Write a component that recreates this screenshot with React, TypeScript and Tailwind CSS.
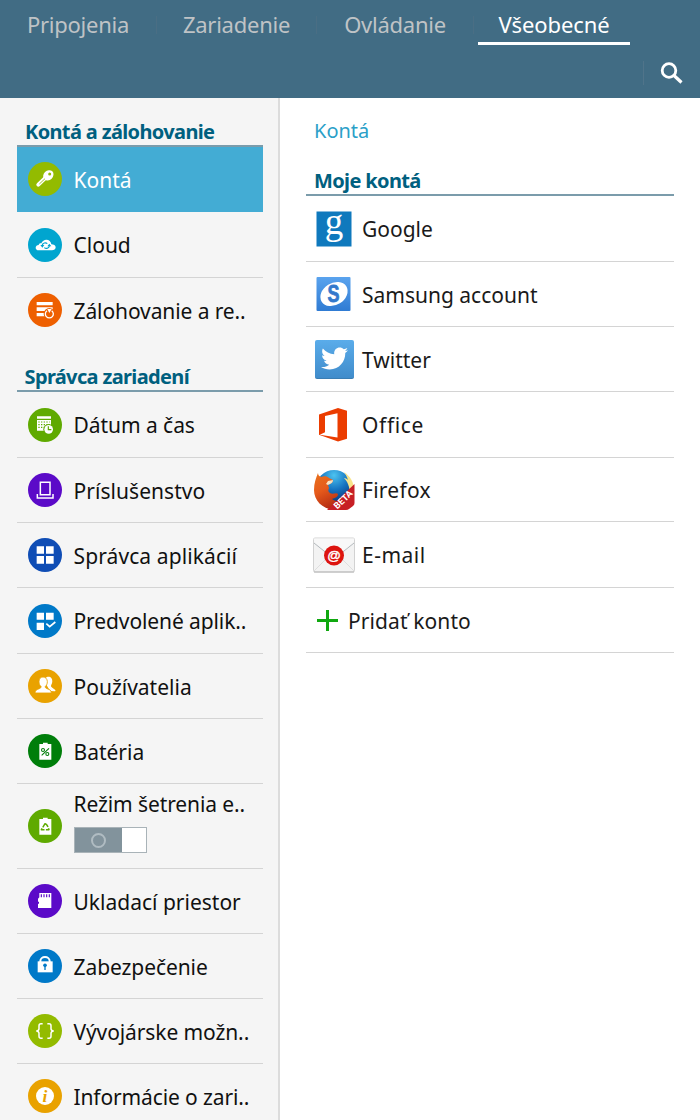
import type { ReactNode } from 'react'
import { FaTwitter } from 'react-icons/fa'

interface MenuItem {
  label: string
  icon: ReactNode
  bg: string
  height: string
  tracking?: string
  selected?: boolean
  toggle?: boolean
  last?: boolean
}

interface Account {
  label: string
  icon: ReactNode
  height: string
  tracking?: string
}

const tabs = [
  { label: 'Pripojenia', box: 'w-[157px]' },
  { label: 'Zariadenie', box: 'w-[160px]' },
  { label: 'Ovládanie', box: 'w-[157px]' },
]

/* Glyphs share the 102 unit canvas of the round badge */

const KeyGlyph = () => (
  <g>
    <path d="M53 47 31 68" stroke="#fff" strokeWidth="12" strokeLinecap="round" />
    <ellipse cx="61" cy="40" rx="17" ry="14" transform="rotate(-45 61 40)" fill="#fff" />
    <circle cx="65" cy="36" r="4.5" fill="#93bb00" />
    <path d="M51 50 34 66" stroke="#93bb00" strokeWidth="2.5" />
  </g>
)

const CloudGlyph = () => (
  <g>
    <path d="M32 67c-6 0-9-4-9-8s4-8 9-8c1-4 4-6 8-5 3-7 9-11 15-11 8 0 14 6 15 14 7 0 13 4 13 9s-5 9-11 9z" fill="#fff" />
    <g fill="none" stroke="#00a5cf" strokeWidth="3.5">
      <path d="M43 54v-3a9 8 0 0 1 15-4" />
      <path d="M64 51v3a9 8 0 0 1-15 5" />
    </g>
    <path d="M37 51h12l-6 8zM58 55h12l-6-8z" fill="#00a5cf" />
  </g>
)

const BackupGlyph = () => (
  <g>
    <path d="M26 27h48v10H26zM26 43h48v11H26zM26 60h30v10H26z" fill="#fff" />
    <circle cx="64" cy="62" r="17" fill="#ee5f00" />
    <path d="M57 53a12 12 0 1 0 14 0" fill="none" stroke="#fff" strokeWidth="4" />
    <path d="M58 48h13l-7 12z" fill="#fff" />
  </g>
)

const CalendarGlyph = () => (
  <g>
    <path d="M27 25h42v7H27zM27 36h42v32H27z" fill="#fff" />
    <path d="M31 42h34M31 50h34M31 58h34" stroke="#5faa00" strokeWidth="3.5" strokeDasharray="4 4" />
    <circle cx="62" cy="64" r="16" fill="#5faa00" />
    <circle cx="62" cy="64" r="13" fill="#fff" />
    <path d="M61 55v10h9" fill="none" stroke="#5faa00" strokeWidth="3.5" />
  </g>
)

const DockGlyph = () => (
  <g fill="none" stroke="#fff" strokeWidth="4.5">
    <path d="M37 65V28h29v37z" />
    <path d="M28 63v12h47V63" />
  </g>
)

const AppsGlyph = () => (
  <path d="M26 25h22v22H26zM54 25h23v22H54zM26 54h22v23H26zM54 54h23v23H54z" fill="#fff" />
)

const DefaultAppsGlyph = () => (
  <g>
    <path d="M26 26h22v21H26zM54 26h23v21H54zM26 56h22v22H26z" fill="#fff" />
    <path d="m55 59 10 9 17-14" fill="none" stroke="#fff" strokeWidth="5" />
  </g>
)

const UsersGlyph = () => (
  <g>
    <path d="M53 27c4-5 13-5 17 0 4 6 4 13 0 20-2 4-1 6 3 9l8 6c3 3 1 5-2 5l-13-1L57 50z" fill="#fff" />
    <path
      d="M45 24c8 0 13 6 13 14 0 6-2 11-6 14-1 4 1 5 5 7 9 3 12 4 13 13H21c1-9 5-10 13-13 4-2 6-3 5-7-4-3-6-8-6-14 0-8 4-14 12-14z"
      fill="#fff"
      stroke="#e9a200"
      strokeWidth="2.5"
    />
  </g>
)

const BatteryGlyph = () => (
  <g>
    <path d="M34 30h11v-4h14v4h11v47H34z" fill="#fff" />
    <g stroke="#007e0a" strokeWidth="3.2" fill="none">
      <path d="m41 64 22-21" />
      <circle cx="45" cy="48" r="4.5" />
      <circle cx="58" cy="60" r="4.5" />
    </g>
  </g>
)

const SaverGlyph = () => (
  <g>
    <path d="M34 30h11v-4h14v4h11v47H34z" fill="#fff" />
    <path
      d="M51 44c6 0 9 10 12 18H40z"
      fill="none"
      stroke="#5faa00"
      strokeWidth="4.5"
      strokeLinejoin="round"
      strokeDasharray="14 4"
    />
  </g>
)

const CardGlyph = () => (
  <g>
    <path d="M34 27h36v45H30V59h3v-6h-3v-9l4-4z" fill="#fff" />
    <path d="M40 31v9M48 31v9M56 31v9M64 31v9" stroke="#5b0ac8" strokeWidth="3.5" />
  </g>
)

const LockGlyph = () => (
  <g>
    <path d="M29 37h45v33H29z" fill="#fff" />
    <path d="M37 39v-3a14 12 0 0 1 28 0v3" fill="none" stroke="#fff" strokeWidth="6" />
    <circle cx="51" cy="49" r="5.5" fill="#0079c8" />
    <path d="M51 50v13" stroke="#0079c8" strokeWidth="4" />
  </g>
)

const BracesGlyph = () => (
  <g fill="none" stroke="#fff" strokeWidth="4.5">
    <path d="M44 29h-5q-6 0-6 6v9q0 6-8 7 8 1 8 7v9q0 6 6 6h5" />
    <path d="M58 29h5q6 0 6 6v9q0 6 8 7-8 1-8 7v9q0 6-6 6h-5" />
  </g>
)

const InfoGlyph = () => (
  <g>
    <circle cx="51" cy="51" r="27" fill="#fff" />
    <text
      x="51"
      y="68"
      textAnchor="middle"
      fontSize="52"
      fontWeight="bold"
      fontStyle="italic"
      fontFamily="Liberation Serif, serif"
      fill="#e9a200"
    >
      i
    </text>
  </g>
)

const GoogleLogo = () => (
  <svg viewBox="0 0 42 42" className="h-[42px] w-[42px] overflow-visible">
    <rect x="3.5" y="3.5" width="35" height="35" fill="#0f79bd" />
    <text x="21" y="25.5" textAnchor="middle" fontSize="37" fontFamily="Liberation Serif, serif" fill="#fff">
      g
    </text>
  </svg>
)

const SamsungLogo = () => (
  <svg viewBox="0 0 42 42" className="h-[42px] w-[42px]">
    <defs>
      <linearGradient id="samsung" x1="0" y1="0" x2="0" y2="1">
        <stop offset="0" stopColor="#5aa3ee" />
        <stop offset="1" stopColor="#2f7bd3" />
      </linearGradient>
    </defs>
    <rect x="3.5" y="4" width="34" height="34" rx="1" fill="url(#samsung)" />
    <ellipse cx="21" cy="21" rx="14.5" ry="11" transform="rotate(-32 21 21)" fill="#fff" />
    <text
      transform="translate(20.5 29) scale(0.78 1)"
      textAnchor="middle"
      fontSize="23"
      fontWeight="bold"
      fontFamily="Liberation Sans, sans-serif"
      fill="#3379cc"
      stroke="#3379cc"
      strokeWidth="0.8"
    >
      S
    </text>
  </svg>
)

const TwitterLogo = () => (
  <div className="flex h-[39px] w-[39px] items-center justify-center rounded-[2px] border-b border-[#3a7db3] bg-linear-to-b from-[#5aacea] to-[#408ccb]">
    <FaTwitter className="h-[27px] w-[27px] text-white" />
  </div>
)

const OfficeLogo = () => (
  <svg viewBox="0 0 42 42" className="h-[42px] w-[42px]">
    <path d="m6 10.500 19-6.500 9 2.800v28L25 37.500 6 30.800z" fill="#eb3c00" />
    <path d="m12 12 12.500-2.700v24.200L6.800 30.700 12 28.300z" fill="#fff" />
  </svg>
)

const FirefoxLogo = () => (
  <svg viewBox="0 0 42 42" className="h-[42px] w-[42px]">
    <defs>
      <radialGradient id="globe" cx="0.5" cy="0.15" r="0.8">
        <stop offset="0" stopColor="#4cc3f0" />
        <stop offset="0.5" stopColor="#1673c0" />
        <stop offset="1" stopColor="#0b2f6d" />
      </radialGradient>
      <linearGradient id="fox" x1="0" y1="0" x2="0.4" y2="1">
        <stop offset="0" stopColor="#e8721c" />
        <stop offset="0.5" stopColor="#e65a1b" />
        <stop offset="1" stopColor="#b52d12" />
      </linearGradient>
    </defs>
    <circle cx="21" cy="19" r="18" fill="url(#globe)" />
    <path d="M31 3c6 4 10 10 10 18l-4 8c0-9-1-15-6-20 2 0 3 1 4 2-1-3-2-5-4-8z" fill="#f9e48a" />
    <path
      d="M5 4c0 2 1 3 3 4 3-1 6-1 8 1l4 2c0 3-3 4-5 5l1 3c-1 2-1 4 1 5 3 2 6-1 8 1 0 3-3 4-6 5 4 3 7 2 10 1-1 5-4 8-8 10C9 40 1 31 1 21 1 14 3 9 5 4z"
      fill="url(#fox)"
    />
    <path d="M15 12l5-1c0 3-3 4-5 5l-2-1z" fill="#f8e2bf" />
    <path d="M41.500 15v19q0 2-1.500 3l-4 3q-1 1-3 1H14z" fill="#c71f25" />
    <text
      x="30.5"
      y="33.5"
      textAnchor="middle"
      fontSize="9"
      fontWeight="bold"
      fontFamily="Roboto, sans-serif"
      fill="#fff"
      transform="rotate(-44 30.5 31)"
    >
      BETA
    </text>
  </svg>
)

const EmailLogo = () => (
  <svg viewBox="0 0 42 42" className="h-[42px] w-[42px]">
    <rect x="0.5" y="4" width="41" height="34" rx="1.500" fill="#f3f3f3" stroke="#d2d2d2" />
    <path d="M1 38h40" stroke="#b5b5b5" />
    <path d="M1 37 15 23M41 37 27 23" stroke="#dedede" />
    <path d="m1 9 15 12h10L41 9" fill="none" stroke="#b3b9bd" />
    <path d="m1 8 15 12h10L41 8V4.500H1z" fill="#f8f8f8" />
    <circle cx="21" cy="21.500" r="10" fill="#dd140f" />
    <text
      x="21"
      y="25.5"
      textAnchor="middle"
      fontSize="13.5"
      fontFamily="Liberation Sans, sans-serif"
      fill="#fff"
      stroke="#fff"
      strokeWidth="0.4"
    >
      @
    </text>
  </svg>
)

const backupItems: MenuItem[] = [
  { label: 'Kontá', icon: <KeyGlyph />, bg: 'bg-[#93bb00]', height: 'h-[65px]', selected: true },
  { label: 'Cloud', icon: <CloudGlyph />, bg: 'bg-[#00a5cf]', height: 'h-[66px]' },
  { label: 'Zálohovanie a re..', icon: <BackupGlyph />, bg: 'bg-[#ee5f00]', height: 'h-[65px]', tracking: 'tracking-[-0.1px]', last: true },
]

const deviceItems: MenuItem[] = [
  { label: 'Dátum a čas', icon: <CalendarGlyph />, bg: 'bg-[#5faa00]', height: 'h-[66px]', tracking: 'tracking-[-0.05px]' },
  { label: 'Príslušenstvo', icon: <DockGlyph />, bg: 'bg-[#5b0ac8]', height: 'h-[65px]', tracking: 'tracking-[0.05px]' },
  { label: 'Správca aplikácií', icon: <AppsGlyph />, bg: 'bg-[#0f4db5]', height: 'h-[65px]', tracking: 'tracking-[0.1px]' },
  { label: 'Predvolené aplik..', icon: <DefaultAppsGlyph />, bg: 'bg-[#0079c8]', height: 'h-[66px]', tracking: 'tracking-[-0.1px]' },
  { label: 'Používatelia', icon: <UsersGlyph />, bg: 'bg-[#e9a200]', height: 'h-[65px]' },
  { label: 'Batéria', icon: <BatteryGlyph />, bg: 'bg-[#007e0a]', height: 'h-[65px]' },
  {
    label: 'Režim šetrenia e..',
    icon: <SaverGlyph />,
    bg: 'bg-[#5faa00]',
    height: 'h-[85px]',
    tracking: 'tracking-[-0.1px]',
    toggle: true,
  },
  { label: 'Ukladací priestor', icon: <CardGlyph />, bg: 'bg-[#5b0ac8]', height: 'h-[65px]' },
  { label: 'Zabezpečenie', icon: <LockGlyph />, bg: 'bg-[#0079c8]', height: 'h-[65px]', tracking: 'tracking-[-0.08px]' },
  { label: 'Vývojárske možn..', icon: <BracesGlyph />, bg: 'bg-[#93bb00]', height: 'h-[65px]', tracking: 'tracking-[-0.1px]' },
  { label: 'Informácie o zari..', icon: <InfoGlyph />, bg: 'bg-[#e9a200]', height: 'h-[65px]', tracking: 'tracking-[-0.12px]' },
]

const accounts: Account[] = [
  { label: 'Google', icon: <GoogleLogo />, height: 'h-[66px]' },
  { label: 'Samsung account', icon: <SamsungLogo />, height: 'h-[65px]' },
  { label: 'Twitter', icon: <TwitterLogo />, height: 'h-[65px]' },
  { label: 'Office', icon: <OfficeLogo />, height: 'h-[66px]', tracking: 'tracking-[0.65px]' },
  { label: 'Firefox', icon: <FirefoxLogo />, height: 'h-[64px]', tracking: 'tracking-[0.25px]' },
  { label: 'E-mail', icon: <EmailLogo />, height: 'h-[66px]', tracking: 'tracking-[0.5px]' },
]

function SectionTitle({ children, className = '' }: { children: ReactNode; className?: string }) {
  return (
    <h2 className={`flex items-end border-b-2 border-[#7b9cab] text-[20px] font-bold text-[#00607f] ${className}`}>
      <span className="leading-[26px] tracking-[-0.64px] whitespace-nowrap">{children}</span>
    </h2>
  )
}

function Toggle() {
  return (
    <span className="flex h-[26px] w-[73px] border border-[#a9b3b8] bg-white">
      <span className="flex w-[47px] items-center justify-center bg-[#82939c]">
        <span className="h-[15px] w-[15px] rounded-full border-2 border-[#b0bcc2]" />
      </span>
    </span>
  )
}

function MenuRow({ item }: { item: MenuItem }) {
  const border = item.last || item.selected ? 'border-transparent' : 'border-[#d4d4d4]'
  return (
    <li
      className={`flex items-center border-b pl-[11px] ${item.height} ${border} ${
        item.selected ? 'bg-[#43acd4] text-white' : 'text-[#111]'
      }`}
    >
      <span className={`h-[34px] w-[34px] shrink-0 rounded-full ${item.bg}`}>
        <svg viewBox="0 0 102 102" className="h-full w-full">
          {item.icon}
        </svg>
      </span>
      <div className={`ml-[11.5px] flex flex-col ${item.toggle ? 'pb-[9px]' : 'pt-px'}`}>
        <span className={`text-[21px] leading-[28px] whitespace-nowrap ${item.tracking ?? ''}`}>{item.label}</span>
        {item.toggle && (
          <div className="mt-[9px]">
            <Toggle />
          </div>
        )}
      </div>
    </li>
  )
}

export default function App() {
  return (
    <div className="flex h-[1120px] w-[700px] flex-col overflow-hidden bg-white font-['Noto_Sans',sans-serif]">
      <header className="h-[98px] shrink-0 bg-[#416c84]">
        <nav className="flex h-[45px] text-[22px] text-[#bfc3c6]">
          {tabs.map((tab) => (
            <div key={tab.label} className={`flex h-[49px] items-center ${tab.box}`}>
              <span className="flex-1 text-center tracking-[-0.25px] whitespace-nowrap">{tab.label}</span>
              <span className="h-[18px] w-px bg-[#4a6e84]" />
            </div>
          ))}
          <div className="ml-1 flex h-[45px] w-[152px] justify-center border-b-[3px] border-white leading-[49px] text-white">
            <span className="tracking-[-0.1px]">Všeobecné</span>
          </div>
        </nav>
        <div className="flex h-[55px] items-center justify-end pr-[16px]">
          <span className="mr-[16px] h-[24px] w-px bg-[#50748a]" />
          <svg viewBox="0 0 24 24" className="h-[24px] w-[24px]" fill="none" stroke="#fff">
            <circle cx="9" cy="9.500" r="6.800" strokeWidth="2.800" />
            <path d="m14 14.500 7.500 7" strokeWidth="3.200" />
          </svg>
        </div>
      </header>

      <div className="flex min-h-0 flex-1">
        <aside className="w-[280px] shrink-0 overflow-hidden border-r-2 border-[#dcdcdc] bg-[#f5f5f5] pr-[15px] pl-[17px]">
          <SectionTitle className="h-[49px] pl-2">Kontá a zálohovanie</SectionTitle>
          <ul>
            {backupItems.map((item) => (
              <MenuRow key={item.label} item={item} />
            ))}
          </ul>
          <SectionTitle className="h-[49px] pl-[7.5px]">Správca zariadení</SectionTitle>
          <ul>
            {deviceItems.map((item) => (
              <MenuRow key={item.label} item={item} />
            ))}
          </ul>
        </aside>

        <main className="flex-1 pr-[26px] pl-[26px]">
          <h1 className="flex h-[49px] items-end pl-2 text-[20px] text-[#2b9fc8]">
            <span className="leading-[32px]">Kontá</span>
          </h1>
          <SectionTitle className="h-[49px] pl-2">Moje kontá</SectionTitle>
          <ul>
            {accounts.map((account) => (
              <li
                key={account.label}
                className={`flex items-center border-b border-[#d4d4d4] pl-[7px] text-[#1a1a1a] ${account.height}`}
              >
                <span className="flex w-[42px] shrink-0 justify-center">{account.icon}</span>
                <span className={`ml-[7px] pt-[3px] text-[21px] whitespace-nowrap ${account.tracking ?? ''}`}>{account.label}</span>
              </li>
            ))}
            <li className="flex h-[65px] items-center border-b border-[#d4d4d4] pl-[11px] text-[#1a1a1a]">
              <svg viewBox="0 0 21 21" className="h-[21px] w-[21px]" stroke="#10a810" strokeWidth="3">
                <path d="M10.500 0v21M0 10.500h21" />
              </svg>
              <span className="ml-[10px] pt-[3px] text-[21px] tracking-[0.1px] whitespace-nowrap">Pridať konto</span>
            </li>
          </ul>
        </main>
      </div>
    </div>
  )
}
